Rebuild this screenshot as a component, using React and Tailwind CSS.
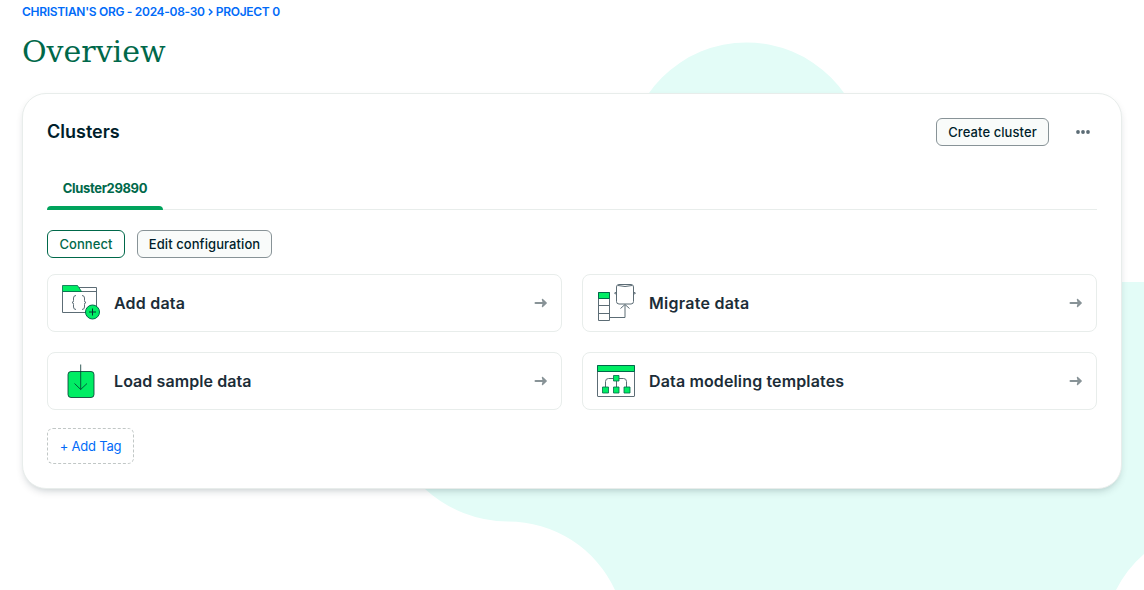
function Backdrop() {
  return (
    <svg className="absolute inset-0 h-full w-full" viewBox="0 0 1144 590" aria-hidden="true">
      <path
        fill="#e3fcf7"
        d="M627 162A119.5 119.5 0 0 1 866 162V282H1144V554A119 119 0 0 0 1116 590H615A117.5 117.5 0 0 0 508 521.5A124 124 0 0 1 425 489L400 400H627Z"
      />
    </svg>
  );
}

function FolderIcon() {
  return (
    <svg width="40" height="40" viewBox="1 -1.5 40 40" fill="none" stroke="#5c6c75" strokeWidth="1">
      <path d="M19 3H36.5V28H2.500V7H36.500" />
      <path d="M2.500 7V1H17.500L21.500 7Z" fill="#00ed64" stroke="#00684a" strokeWidth=".8" />
      <path d="M16 11q-2.500 0-2.500 2.500v2.500q0 2-1.500 2q1.500 0 1.500 2v2.500q0 2.500 2.500 2.500M22 11q2.500 0 2.500 2.500v2.500q0 2 1.500 2q-1.500 0-1.500 2v2.500q0 2.500-2.500 2.500" />
      <circle cx="32.500" cy="27.500" r="7" fill="#00ed64" stroke="#00684a" />
      <path d="M32.500 24v7M29 27.500h7" stroke="#023430" />
    </svg>
  );
}

function MigrateIcon() {
  return (
    <svg width="40" height="40" viewBox="0 -1 40 40" fill="none" stroke="#5c6c75" strokeWidth="1">
      <path d="M2.500 8.500h11v28h-11zM2.500 14.500h11M2.500 21.500h11M2.500 29.500h11" />
      <path d="M2.500 8.500h11v6h-11z" fill="#00ed64" stroke="#00684a" />
      <path d="M13.500 33.500H29V21M24.500 24.500L29 20.500L33.500 24.500" />
      <rect x="20.500" y=".5" width="17" height="19.500" rx="2.500" />
      <path d="M22 1.500q7 2 14 0M20.500 8l-2 1.200l2 1.200M37.500 8l2 1.200l-2 1.200" />
    </svg>
  );
}

function LoadIcon() {
  return (
    <svg width="40" height="40" viewBox="1 -1 40 40" fill="none" stroke="#023430" strokeWidth=".8">
      <rect x="8" y="9.500" width="26" height="26" rx="3" fill="#00ed64" />
      <path d="M20.700 2.500V27.500M14.500 21.500L20.700 27.500L27 21.500" />
    </svg>
  );
}

function ModelIcon() {
  return (
    <svg width="40" height="40" viewBox="0 -1 40 40" fill="none" stroke="#5c6c75" strokeWidth="1">
      <rect x="1.500" y="3.500" width="37" height="31" rx=".5" />
      <path d="M1.500 3.500h37v6h-37z" fill="#00ed64" stroke="#00684a" />
      <path d="M17.500 16.500H12.500Q9.500 16.500 9.500 19.500V25M23 16.500H27.500Q30.500 16.500 30.500 19.500V25M20.500 19V25" />
      <path d="M17.500 13.500h5.500v5.500h-5.500zM6.500 25h6v6h-6zM17.500 25h5.500v6h-5.500zM28 25h6v6h-6z" fill="#00ed64" stroke="#00684a" strokeWidth=".8" />
    </svg>
  );
}

function ArrowIcon() {
  return (
    <svg width="14" height="12" viewBox="0 0 14 12" fill="none" stroke="#889397" strokeWidth="2" strokeLinecap="round" strokeLinejoin="round">
      <path d="M1.500 6H11" />
      <path d="M8.500 2.500L12.200 6L8.500 9.500L9.500 6Z" fill="#889397" strokeWidth="1.400" />
    </svg>
  );
}

const actions = [
  { label: 'Add data', Icon: FolderIcon, text: 'tracking-[0.2px]' },
  { label: 'Migrate data', Icon: MigrateIcon, text: 'tracking-[0.26px]' },
  { label: 'Load sample data', Icon: LoadIcon, text: 'tracking-[0.08px]' },
  { label: 'Data modeling templates', Icon: ModelIcon, text: 'tracking-[0.14px]' },
];

function ActionCard({ label, Icon, text }) {
  return (
    <button className="flex h-[58px] items-center rounded-lg border border-[#e8edeb] bg-white pr-[13px] pl-[13px] text-left">
      <Icon />
      <span className={`ml-[13px] flex-1 text-base font-semibold whitespace-nowrap text-[#1c2d38] ${text}`}>{label}</span>
      <ArrowIcon />
    </button>
  );
}

export default function App() {
  return (
    <div className="relative h-[590px] w-full overflow-hidden bg-white font-['Inter','Liberation_Sans',sans-serif] text-[#001e2b]">
      <Backdrop />
      <main className="relative flex flex-col px-[22px]">
        <nav className="mt-1 flex h-4 items-center gap-[3px] text-xs font-semibold whitespace-nowrap text-[#016bf8]">
          <a className="tracking-[-0.3px]">CHRISTIAN'S ORG - 2024-08-30</a>
          <svg width="5" height="8" viewBox="0 0 5 8" fill="none" stroke="currentColor" strokeWidth="1.500">
            <path d="M1 1L4 4L1 7" />
          </svg>
          <a className="tracking-[-0.3px]">PROJECT 0</a>
        </nav>
        <h1 className="mt-3 h-10 font-['DejaVu_Serif',serif] text-[30px] leading-10 text-[#00684a]">Overview</h1>
        <section className="mt-[21px] h-[396px] w-[1100px] rounded-3xl border border-[#e8edeb] bg-white px-6 shadow-[0_4px_10px_-4px_rgba(0,30,43,0.3)]">
          <header className="mt-6 flex h-7 items-center">
            <h2 className="flex-1 text-lg font-semibold">Clusters</h2>
            <button className="h-7 w-[113px] rounded-md border border-[#889397] bg-[#f9fbfa] pt-0.5 text-[13px] font-medium tracking-[0.08px] whitespace-nowrap">Create cluster</button>
            <button className="mr-[7px] ml-[27px]" aria-label="More">
              <svg width="14" height="6" viewBox="0 0 14 6" fill="#5c6c75">
                <circle cx="2" cy="3" r="1.900" />
                <circle cx="7" cy="3" r="1.900" />
                <circle cx="12" cy="3" r="1.900" />
              </svg>
            </button>
          </header>
          <div className="mt-5 flex h-11 items-stretch border-b border-[#e8edeb]">
            <button className="relative w-[116px] pt-0.5 text-[13px] font-bold tracking-[-0.35px] text-[#00684a]">
              Cluster29890
              <span className="absolute inset-x-0 -bottom-px h-1 rounded-t bg-[#00a35c]" />
            </button>
          </div>
          <div className="mt-5 flex gap-3 text-[13px] font-medium tracking-[0.08px] whitespace-nowrap">
            <button className="h-7 w-[78px] rounded-md border border-[#00684a] bg-white pt-0.5 text-[#00684a]">Connect</button>
            <button className="h-7 w-[135px] rounded-md border border-[#889397] bg-[#f9fbfa] pt-0.5">Edit configuration</button>
          </div>
          <div className="mt-4 grid grid-cols-2 gap-5">
            {actions.map((action) => (
              <ActionCard key={action.label} {...action} />
            ))}
          </div>
          <button className="mt-[18px] h-9 w-[87px] rounded-md border border-dashed border-[#c1c7c6] pt-0.5 text-[13px] tracking-[-0.2px] whitespace-nowrap text-[#016bf8]">+ Add Tag</button>
        </section>
      </main>
    </div>
  );
}
